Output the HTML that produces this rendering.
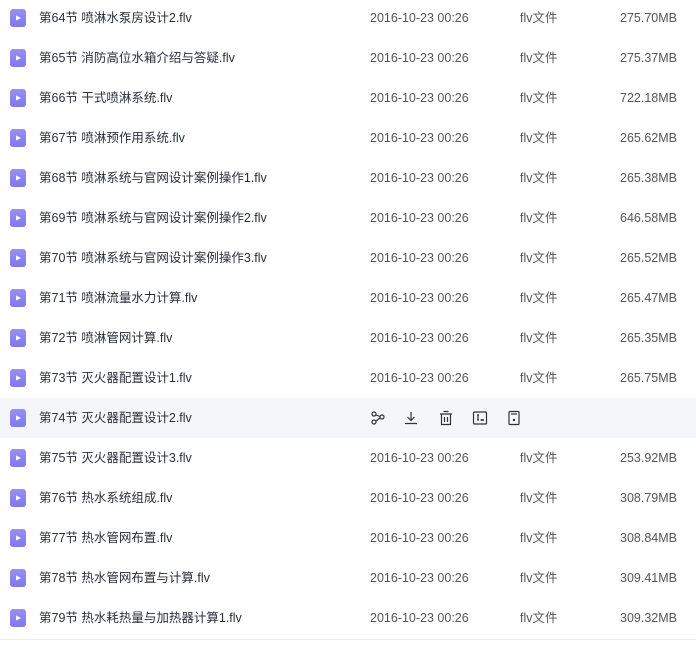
<html><head><style>
body{margin:0;width:696px;height:663px;background:#fff;font-family:"Liberation Sans","Noto Sans CJK SC",sans-serif;overflow:hidden;position:relative}
.r{position:absolute;left:0;width:696px;height:40px;font-size:12.5px;color:#454d5a;line-height:16px}
.r.h{background:#f5f6f9}
.r svg.f{position:absolute;left:10px;top:11px}
.r span{position:absolute;top:12px;height:16px;line-height:16px;white-space:nowrap}
.n{left:39px;color:#2a2f38}
.d{left:370px;color:#555}
.t{left:520px;color:#555}
.s{right:19px;color:#555}
.ic{position:absolute;top:12px}
</style></head><body>
<div id="c"></div>
<script>
var rows=[["第64节 喷淋水泵房设计2.flv","275.70MB"],["第65节 消防高位水箱介绍与答疑.flv","275.37MB"],["第66节 干式喷淋系统.flv","722.18MB"],["第67节 喷淋预作用系统.flv","265.62MB"],["第68节 喷淋系统与官网设计案例操作1.flv","265.38MB"],["第69节 喷淋系统与官网设计案例操作2.flv","646.58MB"],["第70节 喷淋系统与官网设计案例操作3.flv","265.52MB"],["第71节 喷淋流量水力计算.flv","265.47MB"],["第72节 喷淋管网计算.flv","265.35MB"],["第73节 灭火器配置设计1.flv","265.75MB"],["第74节 灭火器配置设计2.flv",""],["第75节 灭火器配置设计3.flv","253.92MB"],["第76节 热水系统组成.flv","308.79MB"],["第77节 热水管网布置.flv","308.84MB"],["第78节 热水管网布置与计算.flv","309.41MB"],["第79节 热水耗热量与加热器计算1.flv","309.32MB"]];
var h="";
rows.forEach(function(r,i){
var top=-2+40*i;
h+='<div class="r'+(i==10?' h':'')+'" style="top:'+top+'px"><svg class="f" width="16" height="18" viewBox="0 0 16 18"><defs><linearGradient id="g'+i+'" x1="0" y1="0" x2="0" y2="1"><stop offset="0" stop-color="#9a8ff5"/><stop offset="1" stop-color="#7f7ae8"/></linearGradient></defs><rect x="0" y="0" width="16" height="18" rx="3" fill="url(#g'+i+')"/><path d="M6 6.5L11 9L6 11.5Z" fill="#fff"/></svg><span class="n">'+r[0]+'</span>';
if(i==10){
h+='<svg class="ic" style="left:370px" width="16" height="16" viewBox="0 0 16 16" fill="none" stroke="#333" stroke-width="1.2"><circle cx="4" cy="4" r="2"/><circle cx="12" cy="7" r="2"/><circle cx="4" cy="12" r="2"/><path d="M6 5L10 6.5M6 11L10 8"/></svg>'+
'<svg class="ic" style="left:403px" width="16" height="16" viewBox="0 0 16 16" fill="none" stroke="#333" stroke-width="1.2"><path d="M8 2V10M4.5 7L8 10.5L11.5 7M2 13.5H14"/></svg>'+
'<svg class="ic" style="left:438px" width="16" height="16" viewBox="0 0 16 16" fill="none" stroke="#333" stroke-width="1.2"><path d="M5.5 1.5H10.5M2 4H14M3.5 4V14.5H12.5V4M6.5 7V12M9.5 7V12"/></svg>'+
'<svg class="ic" style="left:472px" width="16" height="16" viewBox="0 0 16 16" fill="none" stroke="#333" stroke-width="1.2"><rect x="1.5" y="2" width="13" height="12" rx="1"/><path d="M5 5H7M6 5V10M5 10H7"/><circle cx="9.5" cy="10" r=".4"/><circle cx="11" cy="10" r=".4"/></svg>'+
'<svg class="ic" style="left:506px" width="16" height="16" viewBox="0 0 16 16" fill="none" stroke="#333" stroke-width="1.2"><rect x="3" y="1.5" width="10" height="13" rx="1"/><path d="M5 4H11"/><circle cx="8" cy="10" r=".6" fill="#333"/></svg>';
}else{
h+='<span class="d">2016-10-23 00:26</span><span class="t">flv文件</span><span class="s">'+r[1]+'</span>';
}
h+='</div>';
});
h+='<div style="position:absolute;left:0;top:639px;width:696px;height:1px;background:#eee"></div>';
document.getElementById("c").innerHTML=h;
</script>
</body></html>
